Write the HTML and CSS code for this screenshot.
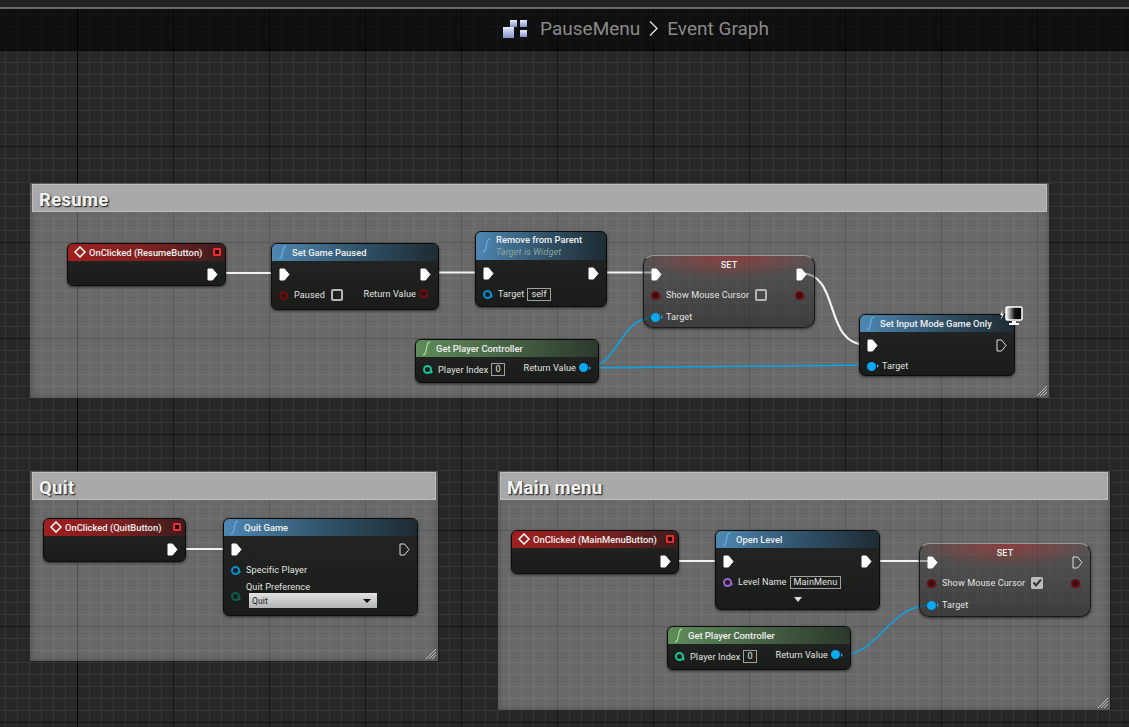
FILE: index.html
```html
<!DOCTYPE html>
<html lang="en">
<head>
    <meta charset="UTF-8">
    <title>PauseMenu - Event Graph</title>
    <link rel="stylesheet" href="styles.css">
</head>
<body>
<svg class="defs" width="0" height="0">
    <symbol id="fn" viewBox="0 0 10 16"><path d="M1 15C3.500 15 4 13.500 4.500 10L5.500 5C6 2.500 6.500 1 9 1" fill="none" stroke="currentColor" stroke-width="1.300"/></symbol>
    <symbol id="event" viewBox="0 0 12 12"><path d="M6 1L11 6 6 11 1 6Z" fill="none" stroke="#fff" stroke-width="1.500"/></symbol>
    <symbol id="exec" viewBox="0 0 11 13"><path d="M1 1H5.500L10 6.500 5.500 12H1Z" fill="#fff" stroke="#fff" stroke-linejoin="round"/></symbol>
    <symbol id="exec-open" viewBox="0 0 11 13"><path d="M1 1H5.500L10 6.500 5.500 12H1Z" fill="none" stroke="#ddd" stroke-linejoin="round"/></symbol>
    <symbol id="grip" viewBox="0 0 10 10"><path d="M0 10L10 0M3 10L10 3M6 10L10 6" stroke="#bbb" stroke-width="1"/></symbol>
</svg>

<div class="graph">
    <div class="strip"></div>
    <div class="crumbs">
        <svg class="bp-icon" width="25" height="19" viewBox="0 0 25 19">
            <defs><linearGradient id="bp" x1="0" y1="0" x2="0" y2="1"><stop offset="0" stop-color="#e6ebf8"/><stop offset="1" stop-color="#7f93cc"/></linearGradient></defs>
            <rect x="7" y="1" width="7" height="7" fill="url(#bp)"/>
            <rect x="17" y="1" width="7" height="7" fill="url(#bp)"/>
            <rect x="0" y="8" width="11" height="11" fill="url(#bp)"/>
            <rect x="17" y="11" width="7" height="7" fill="url(#bp)"/>
        </svg>
        <span>PauseMenu</span>
        <svg class="chevron" width="9" height="15" viewBox="0 0 9 15"><path d="M1 0.500L8 7.500 1 14.500" fill="none" stroke="#eee" stroke-width="1.200"/></svg>
        <span>Event Graph</span>
    </div>

    <!-- comment boxes -->
    <div class="frame frame-resume">
        <div class="frame-title">Resume</div>
        <svg class="grip"><use href="#grip"/></svg>
    </div>
    <div class="frame frame-quit">
        <div class="frame-title">Quit</div>
        <svg class="grip"><use href="#grip"/></svg>
    </div>
    <div class="frame frame-main">
        <div class="frame-title">Main menu</div>
        <svg class="grip"><use href="#grip"/></svg>
    </div>

    <!-- wires -->
    <svg class="wires" width="1129" height="727" viewBox="0 0 1129 727">
        <g class="wire-exec">
            <path d="M217 273H279"/>
            <path d="M425 272.500H482"/>
            <path d="M590 272.500H653"/>
            <path d="M800 273C842 273 822 345 867 345"/>
            <path d="M172 549H232"/>
            <path d="M664 561H722"/>
            <path d="M866 561H929"/>
        </g>
        <g class="wire-obj">
            <path d="M583 368C622 368 616 317 656 317"/>
            <path d="M583 368L871 365"/>
            <path d="M836 656C882 656 886 605 932 605"/>
        </g>
    </svg>

    <!-- Resume -->
    <div class="node n-r-click">
        <div class="head head-event">
            <svg class="ico-event"><use href="#event"/></svg>
            <span class="title">OnClicked (ResumeButton)</span>
            <i class="delegate"></i>
        </div>
        <div class="body">
            <div class="row row-exec"><span></span><svg class="exec"><use href="#exec"/></svg></div>
        </div>
    </div>

    <div class="node n-r-pause">
        <div class="head head-fn">
            <svg class="ico-fn"><use href="#fn"/></svg>
            <span class="title">Set Game Paused</span>
        </div>
        <div class="body">
            <div class="row row-exec"><svg class="exec"><use href="#exec"/></svg><svg class="exec"><use href="#exec"/></svg></div>
            <div class="row">
                <div class="side"><i class="pin pin-red"></i><span>Paused</span><i class="check"></i></div>
                <div class="side side-up"><span>Return Value</span><i class="pin pin-red"></i></div>
            </div>
        </div>
    </div>

    <div class="node n-r-remove">
        <div class="head head-fn head-tall">
            <svg class="ico-fn"><use href="#fn"/></svg>
            <div class="title-stack">
                <span class="title">Remove from Parent</span>
                <span class="subtitle">Target is Widget</span>
            </div>
        </div>
        <div class="body">
            <div class="row row-exec"><svg class="exec"><use href="#exec"/></svg><svg class="exec"><use href="#exec"/></svg></div>
            <div class="row">
                <div class="side"><i class="pin pin-blue-ring"></i><span>Target</span><span class="literal">self</span></div>
            </div>
        </div>
    </div>

    <div class="node node-var n-r-set">
        <span class="var-title">SET</span>
        <div class="body">
            <div class="row row-exec"><svg class="exec"><use href="#exec"/></svg><svg class="exec"><use href="#exec"/></svg></div>
            <div class="row">
                <div class="side"><i class="pin pin-red"></i><span>Show Mouse Cursor</span><i class="check"></i></div>
                <i class="pin pin-red"></i>
            </div>
            <div class="row">
                <div class="side"><i class="pin pin-blue"></i><span>Target</span></div>
            </div>
        </div>
    </div>

    <div class="node n-r-player">
        <div class="head head-pure">
            <svg class="ico-fn"><use href="#fn"/></svg>
            <span class="title">Get Player Controller</span>
        </div>
        <div class="body body-pure">
            <div class="row">
                <div class="side side-down"><i class="pin pin-teal"></i><span>Player Index</span><span class="literal">0</span></div>
                <div class="side side-up"><span>Return Value</span><i class="pin pin-blue"></i></div>
            </div>
        </div>
    </div>

    <div class="node n-r-input">
        <div class="head head-fn">
            <svg class="ico-fn"><use href="#fn"/></svg>
            <span class="title">Set Input Mode Game Only</span>
        </div>
        <div class="body">
            <div class="row row-exec"><svg class="exec"><use href="#exec"/></svg><svg class="exec"><use href="#exec-open"/></svg></div>
            <div class="row"><div class="side"><i class="pin pin-blue"></i><span>Target</span></div></div>
        </div>
        <svg class="client-badge" width="24" height="20" viewBox="0 0 24 20">
            <defs><linearGradient id="scr" x1="0" y1="0" x2="1" y2="0"><stop offset="0" stop-color="#fff"/><stop offset="0.550" stop-color="#111"/><stop offset="1" stop-color="#000"/></linearGradient></defs>
            <path d="M4 4L1 9H3L1.500 14 5 8H3Z" fill="#eee"/>
            <rect x="7" y="1" width="16" height="13" rx="1.500" fill="url(#scr)" stroke="#fff" stroke-width="1.500"/>
            <path d="M13 15H17V17H20V19H10V17H13Z" fill="#fff"/>
        </svg>
    </div>

    <!-- Quit -->
    <div class="node n-q-click">
        <div class="head head-event">
            <svg class="ico-event"><use href="#event"/></svg>
            <span class="title">OnClicked (QuitButton)</span>
            <i class="delegate"></i>
        </div>
        <div class="body">
            <div class="row row-exec"><span></span><svg class="exec"><use href="#exec"/></svg></div>
        </div>
    </div>

    <div class="node n-q-game">
        <div class="head head-fn">
            <svg class="ico-fn"><use href="#fn"/></svg>
            <span class="title">Quit Game</span>
        </div>
        <div class="body">
            <div class="row row-exec"><svg class="exec"><use href="#exec"/></svg><svg class="exec"><use href="#exec-open"/></svg></div>
            <div class="row"><div class="side"><i class="pin pin-blue-ring"></i><span>Specific Player</span></div></div>
            <div class="enum-row">
                <i class="pin pin-teal-dim"></i>
                <div class="enum-stack">
                    <span>Quit Preference</span>
                    <div class="combo"><span>Quit</span><i class="combo-arrow"></i></div>
                </div>
            </div>
        </div>
    </div>

    <!-- Main menu -->
    <div class="node n-m-click">
        <div class="head head-event">
            <svg class="ico-event"><use href="#event"/></svg>
            <span class="title">OnClicked (MainMenuButton)</span>
            <i class="delegate"></i>
        </div>
        <div class="body">
            <div class="row row-exec"><span></span><svg class="exec"><use href="#exec"/></svg></div>
        </div>
    </div>

    <div class="node n-m-level">
        <div class="head head-fn">
            <svg class="ico-fn"><use href="#fn"/></svg>
            <span class="title">Open Level</span>
        </div>
        <div class="body">
            <div class="row row-exec"><svg class="exec"><use href="#exec"/></svg><svg class="exec"><use href="#exec"/></svg></div>
            <div class="row"><div class="side"><i class="pin pin-purple"></i><span>Level Name</span><span class="literal">MainMenu</span></div></div>
            <i class="more-arrow"></i>
        </div>
    </div>

    <div class="node n-m-player">
        <div class="head head-pure">
            <svg class="ico-fn"><use href="#fn"/></svg>
            <span class="title">Get Player Controller</span>
        </div>
        <div class="body body-pure">
            <div class="row">
                <div class="side side-down"><i class="pin pin-teal"></i><span>Player Index</span><span class="literal">0</span></div>
                <div class="side side-up"><span>Return Value</span><i class="pin pin-blue"></i></div>
            </div>
        </div>
    </div>

    <div class="node node-var n-m-set">
        <span class="var-title">SET</span>
        <div class="body">
            <div class="row row-exec"><svg class="exec"><use href="#exec"/></svg><svg class="exec"><use href="#exec-open"/></svg></div>
            <div class="row">
                <div class="side"><i class="pin pin-red"></i><span>Show Mouse Cursor</span>
                    <svg class="checked" width="12" height="12" viewBox="0 0 12 12"><rect width="12" height="12" rx="1.500" fill="#bdbdbd"/><path d="M2.500 5.500L5 8.500 10 2.500" fill="none" stroke="#333" stroke-width="2"/></svg>
                </div>
                <i class="pin pin-red"></i>
            </div>
            <div class="row">
                <div class="side"><i class="pin pin-blue"></i><span>Target</span></div>
            </div>
        </div>
    </div>
</div>
</body>
</html>
```

FILE: styles.css
```css
*{
    box-sizing: border-box;
}
body{
    margin: 0;
    background-color: #262626;
    font-family: "Roboto", "Liberation Sans", sans-serif;
    font-size: 9.100px;
    letter-spacing: 0.100px;
    color: #e2e2e2;
}
.defs{
    position: absolute;
}
.graph{
    position: relative;
    width: 1129px;
    height: 727px;
    overflow: hidden;
    background-color: #272727;
    background-image:
        linear-gradient(90deg, #000 1px, transparent 1px),
        linear-gradient(90deg, #141414 1px, transparent 1px),
        linear-gradient(#141414 1px, transparent 1px),
        linear-gradient(90deg, #363636 1px, transparent 1px),
        linear-gradient(#363636 1px, transparent 1px);
    background-size: 1px 100%, 96px 96px, 96px 96px, 12px 12px, 12px 12px;
    background-position: 77px 0, 77px 50px, 77px 50px, 5px 2px, 5px 2px;
    background-repeat: no-repeat, repeat, repeat, repeat, repeat;
}

/* top of the graph */
.strip{
    height: 9px;
    background-color: #232323;
    border-bottom: 2px solid #6a6a6a;
}
.crumbs{
    height: 42px;
    display: flex;
    align-items: center;
    justify-content: center;
    padding: 0 0 2px 143px;
    gap: 9px;
    background: rgba(0,0,0,0.6);
    border-bottom: 1px solid #050505;
    font-size: 19px;
    letter-spacing: 0;
    color: #8a8a8a;
}
.bp-icon{
    margin-right: 3px;
}

/* comment boxes */
.frame{
    position: absolute;
    background-color: rgba(255,255,255,0.3);
    box-shadow: inset 0 0 6px rgba(0,0,0,0.3), 0 0 2px rgba(0,0,0,0.5);
    padding: 1px 2px 0 2px;
}
.frame-title{
    height: 28px;
    padding: 3px 0 0 6px;
    background-color: #a9a9a9;
    border: 1px solid #bdbdbd;
    font-size: 18.500px;
    line-height: 24px;
    font-weight: 700;
    letter-spacing: 0.300px;
    color: #f2f2f2;
    text-shadow: 1px 1px 0 #3a3a3a, 1px 1px 2px #333;
}
.grip{
    position: absolute;
    right: 2px;
    bottom: 2px;
    width: 10px;
    height: 10px;
}
.frame-resume{
    left: 30px;
    top: 183px;
    width: 1019px;
    height: 215px;
}
.frame-quit{
    left: 30px;
    top: 471px;
    width: 408px;
    height: 190px;
}
.frame-main{
    left: 498px;
    top: 471px;
    width: 612px;
    height: 239px;
}

/* wires */
.wires{
    position: absolute;
    left: 0;
    top: 0;
    fill: none;
}
.wire-exec{
    stroke: #f2f2f2;
    stroke-width: 2.200;
}
.wire-obj{
    stroke: #08a5e8;
    stroke-width: 1.500;
}

/* nodes, placed on the canvas */
.node{
    position: absolute;
    display: flex;
    flex-direction: column;
    border: 1px solid #0b0b0b;
    border-radius: 6px;
    background: linear-gradient(#232624, #1a1c1a);
    box-shadow: 0 1px 3px rgba(0,0,0,0.6);
}
.node-var{
    border-radius: 10px;
    background: linear-gradient(rgba(40,40,40,0.3), rgba(25,25,25,0.55));
    border-color: #1a1a1a;
    border-top-color: #999;
}
.node-var::before{
    content: "";
    position: absolute;
    left: 0;
    right: 0;
    top: 0;
    height: 24px;
    border-radius: 10px 10px 0 0;
    background: radial-gradient(ellipse 55% 100% at 50% 0, rgba(190,40,40,0.5), transparent);
}
.n-r-click{ left: 67px; top: 243px; width: 159px; height: 43px; }
.n-r-pause{ left: 271px; top: 243px; width: 168px; height: 67px; }
.n-r-remove{ left: 475px; top: 231px; width: 132px; height: 76px; }
.n-r-set{ left: 643px; top: 255px; width: 172px; height: 73px; }
.n-r-player{ left: 415px; top: 339px; width: 184px; height: 44px; }
.n-r-input{ left: 859px; top: 314px; width: 156px; height: 62px; }
.n-q-click{ left: 43px; top: 518px; width: 143px; height: 44px; }
.n-q-game{ left: 223px; top: 518px; width: 195px; height: 98px; }
.n-m-click{ left: 511px; top: 530px; width: 168px; height: 44px; }
.n-m-level{ left: 715px; top: 530px; width: 165px; height: 80px; }
.n-m-player{ left: 667px; top: 626px; width: 184px; height: 44px; }
.n-m-set{ left: 919px; top: 543px; width: 172px; height: 74px; }

.head{
    height: 17px;
    flex: none;
    display: flex;
    align-items: center;
    gap: 5px;
    padding: 0 4px 1px 6px;
    border-radius: 5px 5px 0 0;
}
.head-event{
    gap: 3px;
    background: linear-gradient(90deg, #a01f1f, #7a2020 55%, #3a1d1d);
}
.head-tall{
    height: 28px;
}
.head-fn{
    background: linear-gradient(90deg, #4f87b2, #2f5066 55%, #1e2b33);
}
.head-pure{
    background: linear-gradient(90deg, #5f8c5b, #445f43 55%, #2c382c);
}
.title{
    font-size: 9.400px;
    font-weight: 500;
    letter-spacing: 0;
    color: #f0f0f0;
    white-space: nowrap;
}
.title-stack{
    display: flex;
    flex-direction: column;
    line-height: 12px;
}
.subtitle{
    font-style: italic;
    color: #8fa59a;
}
.ico-fn{
    width: 9px;
    height: 15px;
    flex: none;
    color: #62b4ea;
}
.head-pure .ico-fn{
    color: #a5e29a;
}
.ico-event{
    width: 12px;
    height: 12px;
    flex: none;
}
.delegate{
    width: 8px;
    height: 8px;
    flex: none;
    margin-left: auto;
    background-color: #111;
    border: 2px solid #f02a2a;
    border-radius: 1px;
}
.body{
    flex: 1;
    padding: 3px 7px 0 7px;
}
.body-pure{
    padding: 1px 7px 0 7px;
}
.node-var .body{
    padding-top: 8px;
    position: relative;
}
.var-title{
    position: absolute;
    left: 0;
    right: 0;
    top: 4px;
    text-align: center;
    font-weight: 500;
    color: #eee;
    z-index: 1;
}
.row{
    height: 22px;
    display: flex;
    align-items: center;
    justify-content: space-between;
}
.row-exec{
    height: 20px;
}
.side{
    display: flex;
    align-items: center;
    gap: 3px;
}
.side-up{
    margin-top: -3px;
}
.side-down{
    margin-top: 1px;
}
.exec{
    width: 11px;
    height: 13px;
    flex: none;
}
.client-badge{
    position: absolute;
    right: -9px;
    top: -9px;
}

/* pins */
.pin{
    position: relative;
    width: 9px;
    height: 9px;
    flex: none;
    border-radius: 50%;
    margin-right: 3px;
}
.pin::after{
    content: "";
    position: absolute;
    right: -3px;
    top: 2.500px;
    border-left: 2px solid transparent;
    border-top: 2px solid transparent;
    border-bottom: 2px solid transparent;
}
.pin-blue{
    background-color: #08a8f2;
}
.pin-blue::after{
    border-left-color: #08a8f2;
}
.pin-blue-ring{
    border: 2px solid #0a8fd0;
}
.pin-blue-ring::after{
    border-left-color: #0a8fd0;
}
.pin-red{
    background-color: #2a1515;
    border: 2px solid #700c0c;
}
.pin-red::after{
    border-left-color: #700c0c;
}
.pin-teal{
    border: 2px solid #18c49a;
}
.pin-teal::after{
    border-left-color: #18c49a;
}
.pin-teal-dim{
    border: 2px solid #0c5f50;
    margin-top: 11px;
}
.pin-teal-dim::after{
    border-left-color: #0c5f50;
}
.pin-purple{
    border: 2px solid #a35fd6;
}
.pin-purple::after{
    border-left-color: #a35fd6;
}

/* pin widgets */
.check{
    width: 12px;
    height: 12px;
    margin-left: 3px;
    border: 2px solid #b5b5b5;
    border-radius: 2px;
    background-color: #1f1f1f;
}
.node-var .check{
    background-color: transparent;
}
.checked{
    margin-left: 3px;
}
.literal{
    height: 13px;
    padding: 0 3px;
    border: 1px solid #a0a0a0;
    line-height: 11px;
}
.enum-row{
    display: flex;
    gap: 3px;
}
.enum-stack{
    display: flex;
    flex-direction: column;
    line-height: 12px;
}
.combo{
    width: 128px;
    height: 15px;
    display: flex;
    align-items: center;
    justify-content: space-between;
    margin: 0 0 0 3px;
    padding: 0 6px 0 3px;
    background: linear-gradient(#e2e2e2, #b4b4b4);
    color: #222;
    font-size: 8.500px;
}
.combo-arrow{
    border-left: 4px solid transparent;
    border-right: 4px solid transparent;
    border-top: 4px solid #111;
}
.more-arrow{
    display: block;
    width: 0;
    margin: 4px auto 0;
    border-left: 4px solid transparent;
    border-right: 4px solid transparent;
    border-top: 5px solid #ddd;
}
```
